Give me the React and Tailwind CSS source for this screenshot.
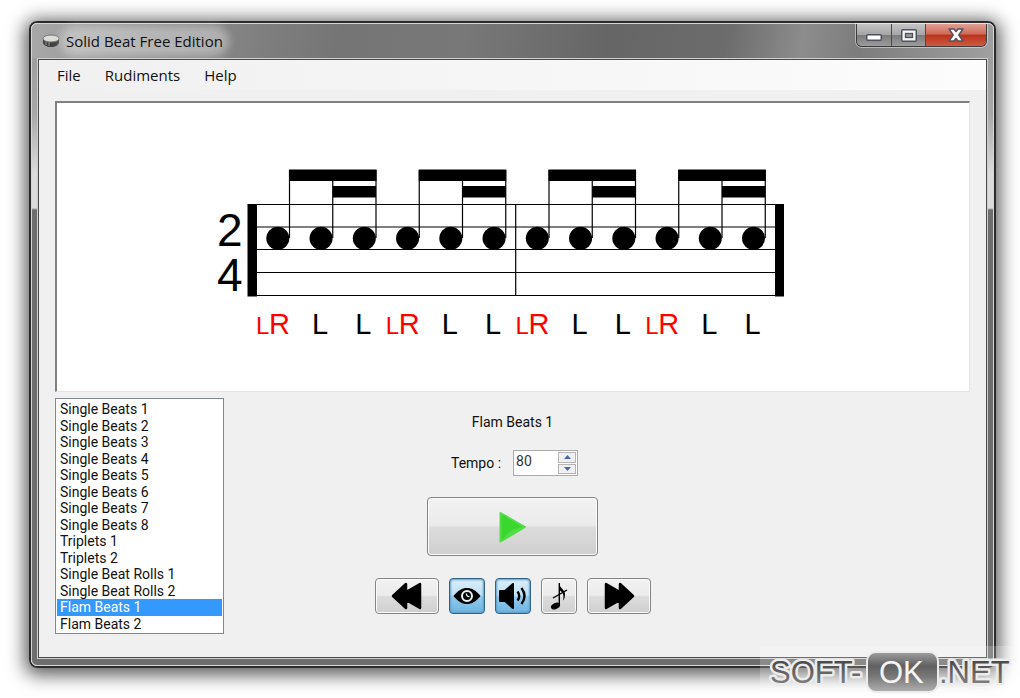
import { useState } from "react";

const RUDIMENTS = [
  "Single Beats 1",
  "Single Beats 2",
  "Single Beats 3",
  "Single Beats 4",
  "Single Beats 5",
  "Single Beats 6",
  "Single Beats 7",
  "Single Beats 8",
  "Triplets 1",
  "Triplets 2",
  "Single Beat Rolls 1",
  "Single Beat Rolls 2",
  "Flam Beats 1",
  "Flam Beats 2",
];

const GROUPS = [0, 1, 2, 3];
const STEP = 43.25;

function DrumIcon() {
  return (
    <svg width="18" height="14" viewBox="0 0 18 14" aria-hidden="true">
      <path d="M1 4v4.500c0 2.500 4 4.500 8 4.500s8-2 8-4.500V4z" fill="#3f3f3f" />
      <path d="M4 7v4M7 8v4" stroke="#9a9a9a" />
      <ellipse cx="9" cy="4.500" rx="8" ry="3.500" fill="#dedcd8" stroke="#777" />
    </svg>
  );
}

function TitleBar() {
  return (
    <div className="flex h-[34px] items-start rounded-t-md bg-[linear-gradient(100deg,#a8a8a8_0%,#8c8c8c_14%,#757575_32%,#787878_45%,#666666_60%,#6c6c6c_72%,#8c8c8c_80%,#7c7c7c_86%,#a0a0a0_100%)] pl-[10px] pr-[6px]">
      <div className="flex h-[34px] flex-1 items-center gap-[6px]">
        <DrumIcon />
        <h1 className="rounded-full bg-white/35 text-[15px] leading-5 text-[#111] shadow-[0_0_8px_6px_rgba(255,255,255,0.35)]">
          Solid Beat Free Edition
        </h1>
      </div>
      <div className="flex h-[23px] overflow-hidden rounded-b-md border border-t-0 border-[#3c3c3c] shadow-[0_0_0_1px_rgba(255,255,255,0.45)]">
        <button
          aria-label="Minimize"
          className="flex w-[35px] items-center justify-center border-r border-[#4a4a4a] bg-[linear-gradient(#c4c4c4_0%,#a6a6a6_48%,#7a7a7a_50%,#9c9c9c_100%)] pt-1"
        >
          <svg width="16" height="7" viewBox="0 0 16 7">
            <rect x="0.750" y="0.750" width="14.500" height="5.500" rx="1" fill="#fff" stroke="#4e5260" strokeWidth="1.500" />
          </svg>
        </button>
        <button
          aria-label="Maximize"
          className="flex w-[34px] items-center justify-center border-r border-[#4a4a4a] bg-[linear-gradient(#c4c4c4_0%,#a6a6a6_48%,#7a7a7a_50%,#9c9c9c_100%)]"
        >
          <svg width="16" height="13" viewBox="0 0 16 13">
            <rect x="0.750" y="0.750" width="14.500" height="11.500" rx="1" fill="#f5f5f5" stroke="#4e5260" strokeWidth="1.500" />
            <rect x="4.500" y="4.500" width="7" height="4" fill="#999" stroke="#4e5260" strokeWidth="1.300" />
          </svg>
        </button>
        <button
          aria-label="Close"
          className="flex w-[60px] items-center justify-center bg-[linear-gradient(#e0a093_0%,#cf6a58_46%,#b83218_50%,#cf5a42_100%)]"
        >
          <svg width="16" height="14" viewBox="0 0 16 14">
            <path
              d="M1 1h5l2 2.500L10 1h5l-4.200 6L15 13h-5l-2-2.500L6 13H1l4.200-6z"
              fill="#f7f7f7"
              stroke="#55525e"
              strokeWidth="1.500"
              strokeLinejoin="round"
            />
          </svg>
        </button>
      </div>
    </div>
  );
}

function MenuBar() {
  return (
    <nav className="flex h-[30px] items-center gap-6 bg-gradient-to-r from-[#f0f0f0] to-[#fcfcfc] px-[18px] text-[15px] text-[#111]">
      <button>File</button>
      <button>Rudiments</button>
      <button>Help</button>
    </nav>
  );
}

function Score() {
  return (
    <svg
      width="572"
      height="180"
      viewBox="215 165 572 180"
      className="max-w-full font-['Liberation_Sans',sans-serif]"
      role="img"
      aria-label="Flam Beats 1"
    >
      {[204.5, 227, 249.5, 272.5, 295.5].map((y) => (
        <path key={y} d={`M250 ${y}H782`} stroke="#000" strokeWidth="1.200" />
      ))}
      <rect x="247.500" y="204" width="9.500" height="92.500" />
      <rect x="775" y="204" width="9" height="92.500" />
      <path d="M515.700 204V296" stroke="#000" strokeWidth="1.200" />
      <text x="217" y="246" fontSize="46">2</text>
      <text x="217" y="291" fontSize="46">4</text>
      {GROUPS.map((group) => {
        const x = 277.8 + group * STEP * 3;
        const stem = x + 11.7;
        return (
          <g key={group}>
            <rect x={stem - 0.5} y="169.500" width={STEP * 2 + 1} height="11.500" />
            <rect x={stem + STEP} y="186" width={STEP} height="11.500" />
            {[0, 1, 2].map((note) => (
              <g key={note}>
                <circle cx={x + note * STEP} cy="238.300" r="11.500" />
                <path
                  d={`M${stem + note * STEP} 170V238`}
                  stroke="#000"
                  strokeWidth="1.200"
                />
              </g>
            ))}
            <text x={x - 21.8} y="334" fontSize="24" fill="#f00">L</text>
            <text x={x - 8.8} y="334" fontSize="29" fill="#f00">R</text>
            <text x={x + STEP - 9} y="334" fontSize="29">L</text>
            <text x={x + STEP * 2 - 9} y="334" fontSize="29">L</text>
          </g>
        );
      })}
    </svg>
  );
}

function RudimentList({ selected, onSelect }) {
  return (
    <ul className="flex h-[236px] w-[169px] flex-col border border-[#828790] bg-white px-px pt-[2px] pb-px font-[Roboto,sans-serif] text-sm">
      {RUDIMENTS.map((name) => (
        <li key={name} className="flex min-h-0 flex-1">
          <button
            onClick={() => onSelect(name)}
            className={`w-full px-[3px] text-left leading-4 ${
              name === selected ? "bg-[#3399ff] text-white" : "text-[#111]"
            }`}
          >
            {name}
          </button>
        </li>
      ))}
    </ul>
  );
}

function TempoField() {
  const [tempo, setTempo] = useState(80);

  return (
    <div className="flex items-center gap-3 pl-1">
      <label htmlFor="tempo">Tempo :</label>
      <div className="flex h-[26px] w-[65px] border border-[#ababab] bg-white p-px">
        <input
          id="tempo"
          type="text"
          inputMode="numeric"
          value={tempo}
          onChange={(e) => setTempo(Number(e.target.value.replace(/\D/g, "")))}
          className="w-full min-w-0 flex-1 pl-px pb-1 text-[#333] outline-none"
        />
        <div className="flex w-[18px] flex-col gap-px">
          <button
            aria-label="Increase tempo"
            onClick={() => setTempo(tempo + 1)}
            className="flex flex-1 items-center justify-center border border-[#b5b5b5] bg-[#f0f0f0]"
          >
            <svg width="7" height="4" viewBox="0 0 7 4">
              <path d="M3.500 0L7 4H0z" fill="#4a66a8" />
            </svg>
          </button>
          <button
            aria-label="Decrease tempo"
            onClick={() => setTempo(Math.max(0, tempo - 1))}
            className="flex flex-1 items-center justify-center border border-[#b5b5b5] bg-[#f0f0f0]"
          >
            <svg width="7" height="4" viewBox="0 0 7 4">
              <path d="M0 0h7L3.500 4z" fill="#4a66a8" />
            </svg>
          </button>
        </div>
      </div>
    </div>
  );
}

const plainButton =
  "flex items-center justify-center rounded-[4px] border border-[#858585] bg-[linear-gradient(#f2f2f2_0%,#ebebeb_48%,#dcdcdc_52%,#cfcfcf_100%)] shadow-[inset_0_0_0_1px_#fafafa]";
const activeButton =
  "flex items-center justify-center rounded-[4px] border border-[#2f6387] bg-[linear-gradient(#dceffa_0%,#bfe0f5_48%,#94caed_52%,#6db5e2_100%)] shadow-[inset_0_0_2px_1px_#5f9dc4]";

function Transport() {
  const [showScore, setShowScore] = useState(true);
  const [sound, setSound] = useState(true);
  const [grace, setGrace] = useState(false);

  return (
    <div className="flex gap-[10px]">
      <button aria-label="Previous" className={`${plainButton} h-9 w-16`}>
        <svg width="32" height="28" viewBox="0 0 32 28">
          <path
            d="M2 14L15 2v8L29 2v24L15 18v8z"
            stroke="#000"
            strokeWidth="2.500"
            strokeLinejoin="round"
          />
        </svg>
      </button>
      <button
        aria-label="Show score"
        aria-pressed={showScore}
        onClick={() => setShowScore(!showScore)}
        className={`${showScore ? activeButton : plainButton} h-9 w-9`}
      >
        <svg width="28" height="18" viewBox="0 0 28 18">
          <path d="M0.500 9C5 3.500 9 1 14 1s9 2.500 13.500 8C23 14.500 19 17 14 17S5 14.500 0.500 9z" />
          <circle cx="14" cy="9" r="5" fill="none" stroke="#e8f4fb" strokeWidth="2" />
          <path d="M13.500 6.500a2.500 2.500 0 0 0 3 3" fill="none" stroke="#e8f4fb" strokeWidth="1.300" />
        </svg>
      </button>
      <button
        aria-label="Sound"
        aria-pressed={sound}
        onClick={() => setSound(!sound)}
        className={`${sound ? activeButton : plainButton} h-9 w-9`}
      >
        <svg width="29" height="28" viewBox="0 0 29 28">
          <path
            d="M2 9h5l8-7v24l-8-7H2z"
            stroke="#000"
            strokeWidth="2"
            strokeLinejoin="round"
          />
          <path
            d="M19.500 9.500q3.500 4.500 0 9M23.500 6q6 8 0 16"
            fill="none"
            stroke="#000"
            strokeWidth="2.400"
          />
        </svg>
      </button>
      <button
        aria-label="Grace notes"
        aria-pressed={grace}
        onClick={() => setGrace(!grace)}
        className={`${grace ? activeButton : plainButton} h-9 w-9`}
      >
        <svg width="18" height="30" viewBox="0 0 18 30">
          <ellipse cx="5.500" cy="25" rx="4.800" ry="3" transform="rotate(-25 5.500 25)" />
          <path d="M9.300 24V2" stroke="#000" strokeWidth="1.400" />
          <path d="M9 2c.5 5 6.500 7 6 12-.2 3-1 4.500-1.800 5.500C14 14 13.500 11.500 9 9z" />
          <path d="M3 17L17 9" stroke="#000" strokeWidth="1.400" />
        </svg>
      </button>
      <button aria-label="Next" className={`${plainButton} h-9 w-16`}>
        <svg width="32" height="28" viewBox="0 0 32 28">
          <path
            d="M30 14L17 2v8L3 2v24l14-8v8z"
            stroke="#000"
            strokeWidth="2.500"
            strokeLinejoin="round"
          />
        </svg>
      </button>
    </div>
  );
}

function Watermark() {
  return (
    <div className="absolute right-0 bottom-0 bg-white/20 pl-2">
      <svg
        width="252"
        height="52"
        viewBox="0 0 252 52"
        className="font-['Liberation_Sans',sans-serif]"
      >
        <defs>
          <linearGradient id="ink" x1="0" y1="0" x2="0" y2="1">
            <stop offset="0" stopColor="#3c3c3c" />
            <stop offset="1" stopColor="#8c8c8c" />
          </linearGradient>
          <linearGradient id="badge" x1="0" y1="0" x2="0" y2="1">
            <stop offset="0" stopColor="#a0a0a0" />
            <stop offset="0.350" stopColor="#606060" />
            <stop offset="0.600" stopColor="#777" />
            <stop offset="1" stopColor="#b0b0b0" />
          </linearGradient>
        </defs>
        <g fontSize="31" fill="url(#ink)" stroke="#ececec" strokeWidth="5" strokeLinejoin="round" paintOrder="stroke">
          <text x="2" y="37">SOFT-</text>
          <text x="171" y="37">.NET</text>
        </g>
        <rect x="99" y="6" width="71" height="40" rx="9" fill="url(#badge)" stroke="#ececec" strokeWidth="2" />
        <text x="111" y="37" fontSize="31" fill="#f4f4f4">OK</text>
      </svg>
    </div>
  );
}

export default function App() {
  const [selected, setSelected] = useState("Flam Beats 1");

  return (
    <main className="relative flex min-h-screen bg-white pt-[21px] pr-6 pb-[30px] pl-[29px] font-['Open_Sans',sans-serif]">
      <div className="flex min-w-0 flex-1 flex-col rounded-lg border-2 border-[#2b2b2b] shadow-[0_3px_18px_4px_rgba(0,0,0,0.65)]">
        <div className="flex flex-1 flex-col rounded-md border border-[#d5d5d5] bg-[linear-gradient(#989898_0px,#a8a8a8_90px,#dcdcdc_150px,#dcdcdc_184px,#6e6e6e_186px,#6e6e6e_100%)]">
          <TitleBar />
          <div className="mx-[5px] mb-[6px] flex flex-1 flex-col border border-[#cfcfcf]">
            <div className="flex flex-1 flex-col border border-[#4a4a4a] bg-[#f0f0f0]">
              <MenuBar />
              <div className="flex flex-1 flex-col px-4 pt-[11px] pb-[22px]">
                <section className="flex h-[291px] justify-center border-t-2 border-r border-b border-l-2 border-t-[#808080] border-r-[#e3e3e3] border-b-[#e3e3e3] border-l-[#808080] bg-white pt-[62px] pr-6">
                  <Score />
                </section>
                <div className="mt-[6px] flex">
                  <RudimentList selected={selected} onSelect={setSelected} />
                  <section className="flex flex-1 flex-col items-center pt-[14px] pr-[169px] font-[Roboto,sans-serif] text-sm text-[#111]">
                    <h2 className="leading-5">{selected}</h2>
                    <div className="mt-[18px]">
                      <TempoField />
                    </div>
                    <button
                      aria-label="Play"
                      className={`${plainButton} mt-[21px] mb-[22px] h-[59px] w-[171px]`}
                    >
                      <svg width="28" height="32" viewBox="0 0 28 32">
                        <path
                          d="M1.500 2L26 16 1.500 30.500z"
                          fill="#3bd72f"
                          stroke="#52dd48"
                          strokeWidth="2"
                          strokeLinejoin="round"
                        />
                        <path d="M4 29Q9 18 25 16z" fill="#4fdf43" />
                      </svg>
                    </button>
                    <Transport />
                  </section>
                </div>
              </div>
            </div>
          </div>
        </div>
      </div>
      <Watermark />
    </main>
  );
}
